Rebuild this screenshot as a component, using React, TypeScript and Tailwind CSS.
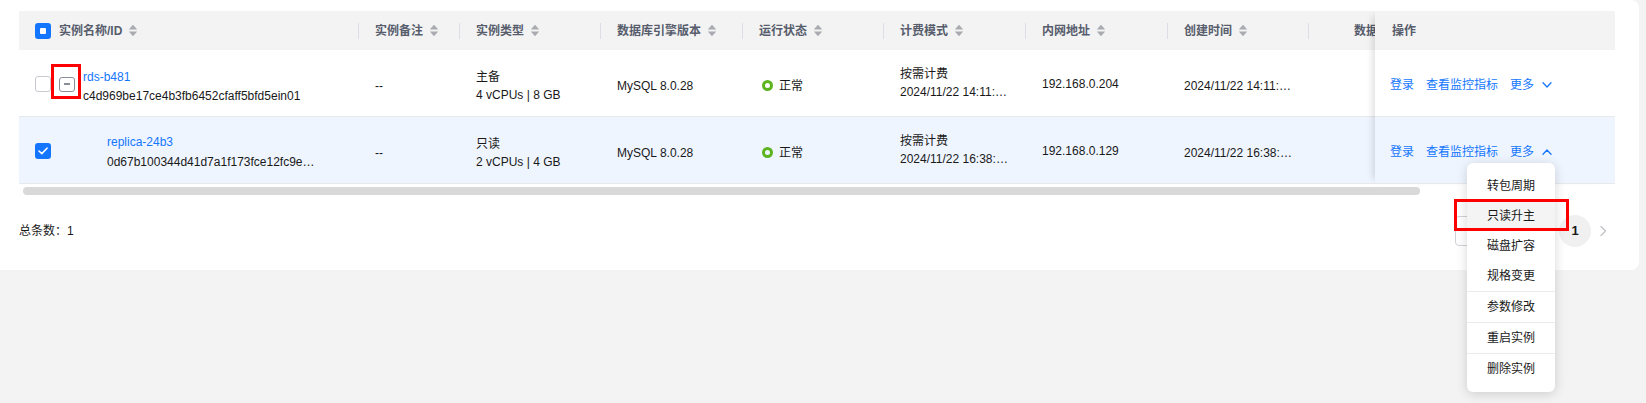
import React from "react";

const SortIcon = () => (
  <svg width="10" height="13" viewBox="0 0 10 13" className="ml-[6px] shrink-0">
    <path d="M5 0.8 L9.2 5.6 H0.8 Z" fill="#a9abb0" />
    <path d="M0.8 7.4 H9.2 L5 12.2 Z" fill="#a9abb0" />
  </svg>
);

const Sep = () => <div className="w-px h-[16px] bg-[#dcdee3] shrink-0" />;

const HeadCell = ({ w, label, pl = "pl-[16px]" }: { w: string; label: string; pl?: string }) => (
  <div className={`${w} shrink-0 flex items-center h-full`}>
    <Sep />
    <div className={`${pl} flex items-center whitespace-nowrap font-bold text-[#575d6c]`}>
      {label}
      <SortIcon />
    </div>
  </div>
);

const CheckboxHeader = () => (
  <div className="w-[16px] h-[16px] rounded-[3px] bg-[#1476ff] flex items-center justify-center shrink-0">
    <div className="w-[6px] h-[6px] bg-white rounded-[1px]" />
  </div>
);

const CheckboxEmpty = () => (
  <div className="w-[16px] h-[16px] rounded-[3px] border border-[#c8cad0] bg-white shrink-0" />
);

const CheckboxChecked = () => (
  <div className="w-[16px] h-[16px] rounded-[3px] bg-[#1476ff] flex items-center justify-center shrink-0">
    <svg width="10" height="8" viewBox="0 0 10 8">
      <path d="M1 4 L3.8 6.6 L9 1.2" fill="none" stroke="white" strokeWidth="1.6" strokeLinecap="round" strokeLinejoin="round" />
    </svg>
  </div>
);

const ExpandIcon = () => (
  <div className="w-[16px] h-[15px] rounded-[3px] border border-[#8a8e99] flex items-center justify-center shrink-0">
    <div className="w-[6px] h-[1.5px] bg-[#8a8e99]" />
  </div>
);

const Status = () => (
  <div className="flex items-center ml-[3px]">
    <div className="w-[11px] h-[11px] rounded-full border-[3px] border-[#5cb51f]" />
    <span className="ml-[6px]">正常</span>
  </div>
);

const Chevron = ({ up }: { up?: boolean }) => (
  <svg width="10" height="6" viewBox="0 0 10 6" className="ml-[8px]">
    <path
      d={up ? "M1 5.2 L5 1 L9 5.2" : "M1 0.8 L5 5 L9 0.8"}
      fill="none"
      stroke="#1476ff"
      strokeWidth="1.3"
      strokeLinecap="round"
      strokeLinejoin="round"
    />
  </svg>
);

const Cell = ({ w, children, cls = "" }: { w: string; children?: React.ReactNode; cls?: string }) => (
  <div className={`${w} shrink-0 pl-[17px] pr-[16px] flex flex-col justify-center h-full ${cls}`}>{children}</div>
);

type RowData = {
  bg: string;
  first: React.ReactNode;
  type1: string;
  type2: string;
  bill2: string;
  ip: string;
  created: string;
};

const DataRow = ({ r }: { r: RowData }) => (
  <div className={`flex h-[67px] border-b border-[#e8e9ec] ${r.bg}`}>
    <div className="w-[339px] shrink-0 flex items-center pl-[16px] h-full pt-[2px]">{r.first}</div>
    <Cell w="w-[101px]" cls="pt-[5px]">--</Cell>
    <Cell w="w-[141px]" cls="leading-[18px] pt-[5px]">
      <div>{r.type1}</div>
      <div className="whitespace-nowrap">{r.type2}</div>
    </Cell>
    <Cell w="w-[142px]" cls="pt-[5px]">MySQL 8.0.28</Cell>
    <Cell w="w-[141px]" cls="pt-[5px]">
      <Status />
    </Cell>
    <Cell w="w-[142px]" cls="leading-[18px]">
      <div>按需计费</div>
      <div className="truncate">{r.bill2}</div>
    </Cell>
    <Cell w="w-[142px]" cls="pt-[2px]">{r.ip}</Cell>
    <Cell w="w-[141px]" cls="pt-[5px]">
      <div className="truncate">{r.created}</div>
    </Cell>
    <div className="w-[200px] shrink-0" />
  </div>
);

const OpsRow = ({ bg, up }: { bg: string; up?: boolean }) => (
  <div className={`h-[67px] border-b border-[#e8e9ec] ${bg} flex items-center pl-[15px] pt-[4px] text-[#1476ff] whitespace-nowrap`}>
    <span>登录</span>
    <span className="ml-[12px]">查看监控指标</span>
    <span className="ml-[12px]">更多</span>
    <Chevron up={up} />
  </div>
);

export default function App() {
  const rows: RowData[] = [
    {
      bg: "bg-white",
      first: (
        <>
          <CheckboxEmpty />
          <div className="ml-[8px]">
            <ExpandIcon />
          </div>
          <div className="ml-[8px] leading-[19px] pt-[5px]">
            <div className="text-[#1476ff]">rds-b481</div>
            <div className="whitespace-nowrap">c4d969be17ce4b3fb6452cfaff5bfd5ein01</div>
          </div>
        </>
      ),
      type1: "主备",
      type2: "4 vCPUs | 8 GB",
      bill2: "2024/11/22 14:11:02 GMT+08:00",
      ip: "192.168.0.204",
      created: "2024/11/22 14:11:02 GMT+08:00",
    },
    {
      bg: "bg-[#eff5ff]",
      first: (
        <>
          <CheckboxChecked />
          <div className="ml-[56px] leading-[20px] pt-[2px]">
            <div className="text-[#1476ff]">replica-24b3</div>
            <div className="w-[208px] truncate">0d67b100344d41d7a1f173fce12fc9e0in01</div>
          </div>
        </>
      ),
      type1: "只读",
      type2: "2 vCPUs | 4 GB",
      bill2: "2024/11/22 16:38:45 GMT+08:00",
      ip: "192.168.0.129",
      created: "2024/11/22 16:38:45 GMT+08:00",
    },
  ];

  const menu = ["转包周期", "只读升主", "磁盘扩容", "规格变更"];

  return (
    <div className="relative w-[1646px] h-[403px] bg-[#f3f3f3] text-[12px] text-[#191919] font-['Liberation_Sans','Noto_Sans_CJK_SC',sans-serif] overflow-hidden">
      <div className="w-[1639px] h-[270px] bg-white rounded-r-[8px] pt-[11px] pl-[19px] pr-[24px]">
        <div className="flex items-start">
          {/* scrollable part */}
          <div className="w-[1356px] overflow-hidden">
            <div className="w-[1489px]">
              <div className="flex h-[39px] bg-[#f3f3f3]">
                <div className="w-[339px] shrink-0 flex items-center pl-[16px]">
                  <CheckboxHeader />
                  <div className="ml-[8px] flex items-center font-bold text-[#575d6c] whitespace-nowrap">
                    实例名称/ID
                    <SortIcon />
                  </div>
                </div>
                <HeadCell w="w-[101px]" label="实例备注" />
                <HeadCell w="w-[141px]" label="实例类型" />
                <HeadCell w="w-[142px]" label="数据库引擎版本" />
                <HeadCell w="w-[141px]" label="运行状态" />
                <HeadCell w="w-[142px]" label="计费模式" />
                <HeadCell w="w-[142px]" label="内网地址" />
                <HeadCell w="w-[141px]" label="创建时间" />
                <HeadCell w="w-[200px]" label="数据库端口" pl="pl-[45px]" />
              </div>
              {rows.map((r, i) => (
                <DataRow key={i} r={r} />
              ))}
            </div>
          </div>
          {/* fixed operations column */}
          <div className="w-[240px] shrink-0 relative z-10 shadow-[-7px_0_7px_-5px_rgba(0,0,0,0.14)]">
            <div className="h-[39px] bg-[#f3f3f3] flex items-center pl-[17px] font-bold text-[#575d6c]">操作</div>
            <OpsRow bg="bg-white" />
            <OpsRow bg="bg-[#eff5ff]" up />
          </div>
        </div>
        {/* horizontal scrollbar */}
        <div className="mt-[3px] ml-[4px] w-[1397px] h-[8px] rounded-full bg-[#d9d9d9]" />

        {/* pagination */}
        <div className="mt-[20px] h-[32px] flex items-center justify-between">
          <div>总条数：1</div>
          <div className="flex items-center">
            <div className="w-[92px] h-[30px] rounded-[4px] border border-[#d0d2d8] bg-white" />
            <div className="ml-[12px] w-[32px] h-[32px] rounded-full bg-[#f0f0f0] flex items-center justify-center font-bold text-[13px] text-[#191919]">
              1
            </div>
            <div className="w-[24px] h-[32px] flex items-center justify-center">
              <svg width="8" height="12" viewBox="0 0 8 12">
                <path d="M2 1.5 L6.5 6 L2 10.5" fill="none" stroke="#c2c4c9" strokeWidth="1.4" strokeLinecap="round" strokeLinejoin="round" />
              </svg>
            </div>
          </div>
        </div>
      </div>

      {/* dropdown menu */}
      <div className="absolute left-[1467px] top-[163px] w-[88px] bg-white rounded-[6px] shadow-[0_2px_12px_rgba(0,0,0,0.16)] py-[8px] z-20">
        {menu.map((m, i) => (
          <div
            key={m}
            className={`h-[30px] flex items-center justify-center ${i === 1 ? "bg-[#f4f4f4]" : ""}`}
          >
            {m}
          </div>
        ))}
        <div className="h-px bg-[#ebebeb]" />
        <div className="h-[30px] flex items-center justify-center">参数修改</div>
        <div className="h-px bg-[#ebebeb]" />
        <div className="h-[30px] flex items-center justify-center">重启实例</div>
        <div className="h-px bg-[#ebebeb]" />
        <div className="h-[30px] flex items-center justify-center">删除实例</div>
      </div>

      {/* annotation boxes */}
      <div className="absolute left-[51px] top-[64px] w-[30px] h-[35px] border-[3px] border-[#ff0000] z-30" />
      <div className="absolute left-[1454px] top-[199px] w-[115px] h-[32px] border-[3px] border-[#ff0000] z-30" />
    </div>
  );
}
